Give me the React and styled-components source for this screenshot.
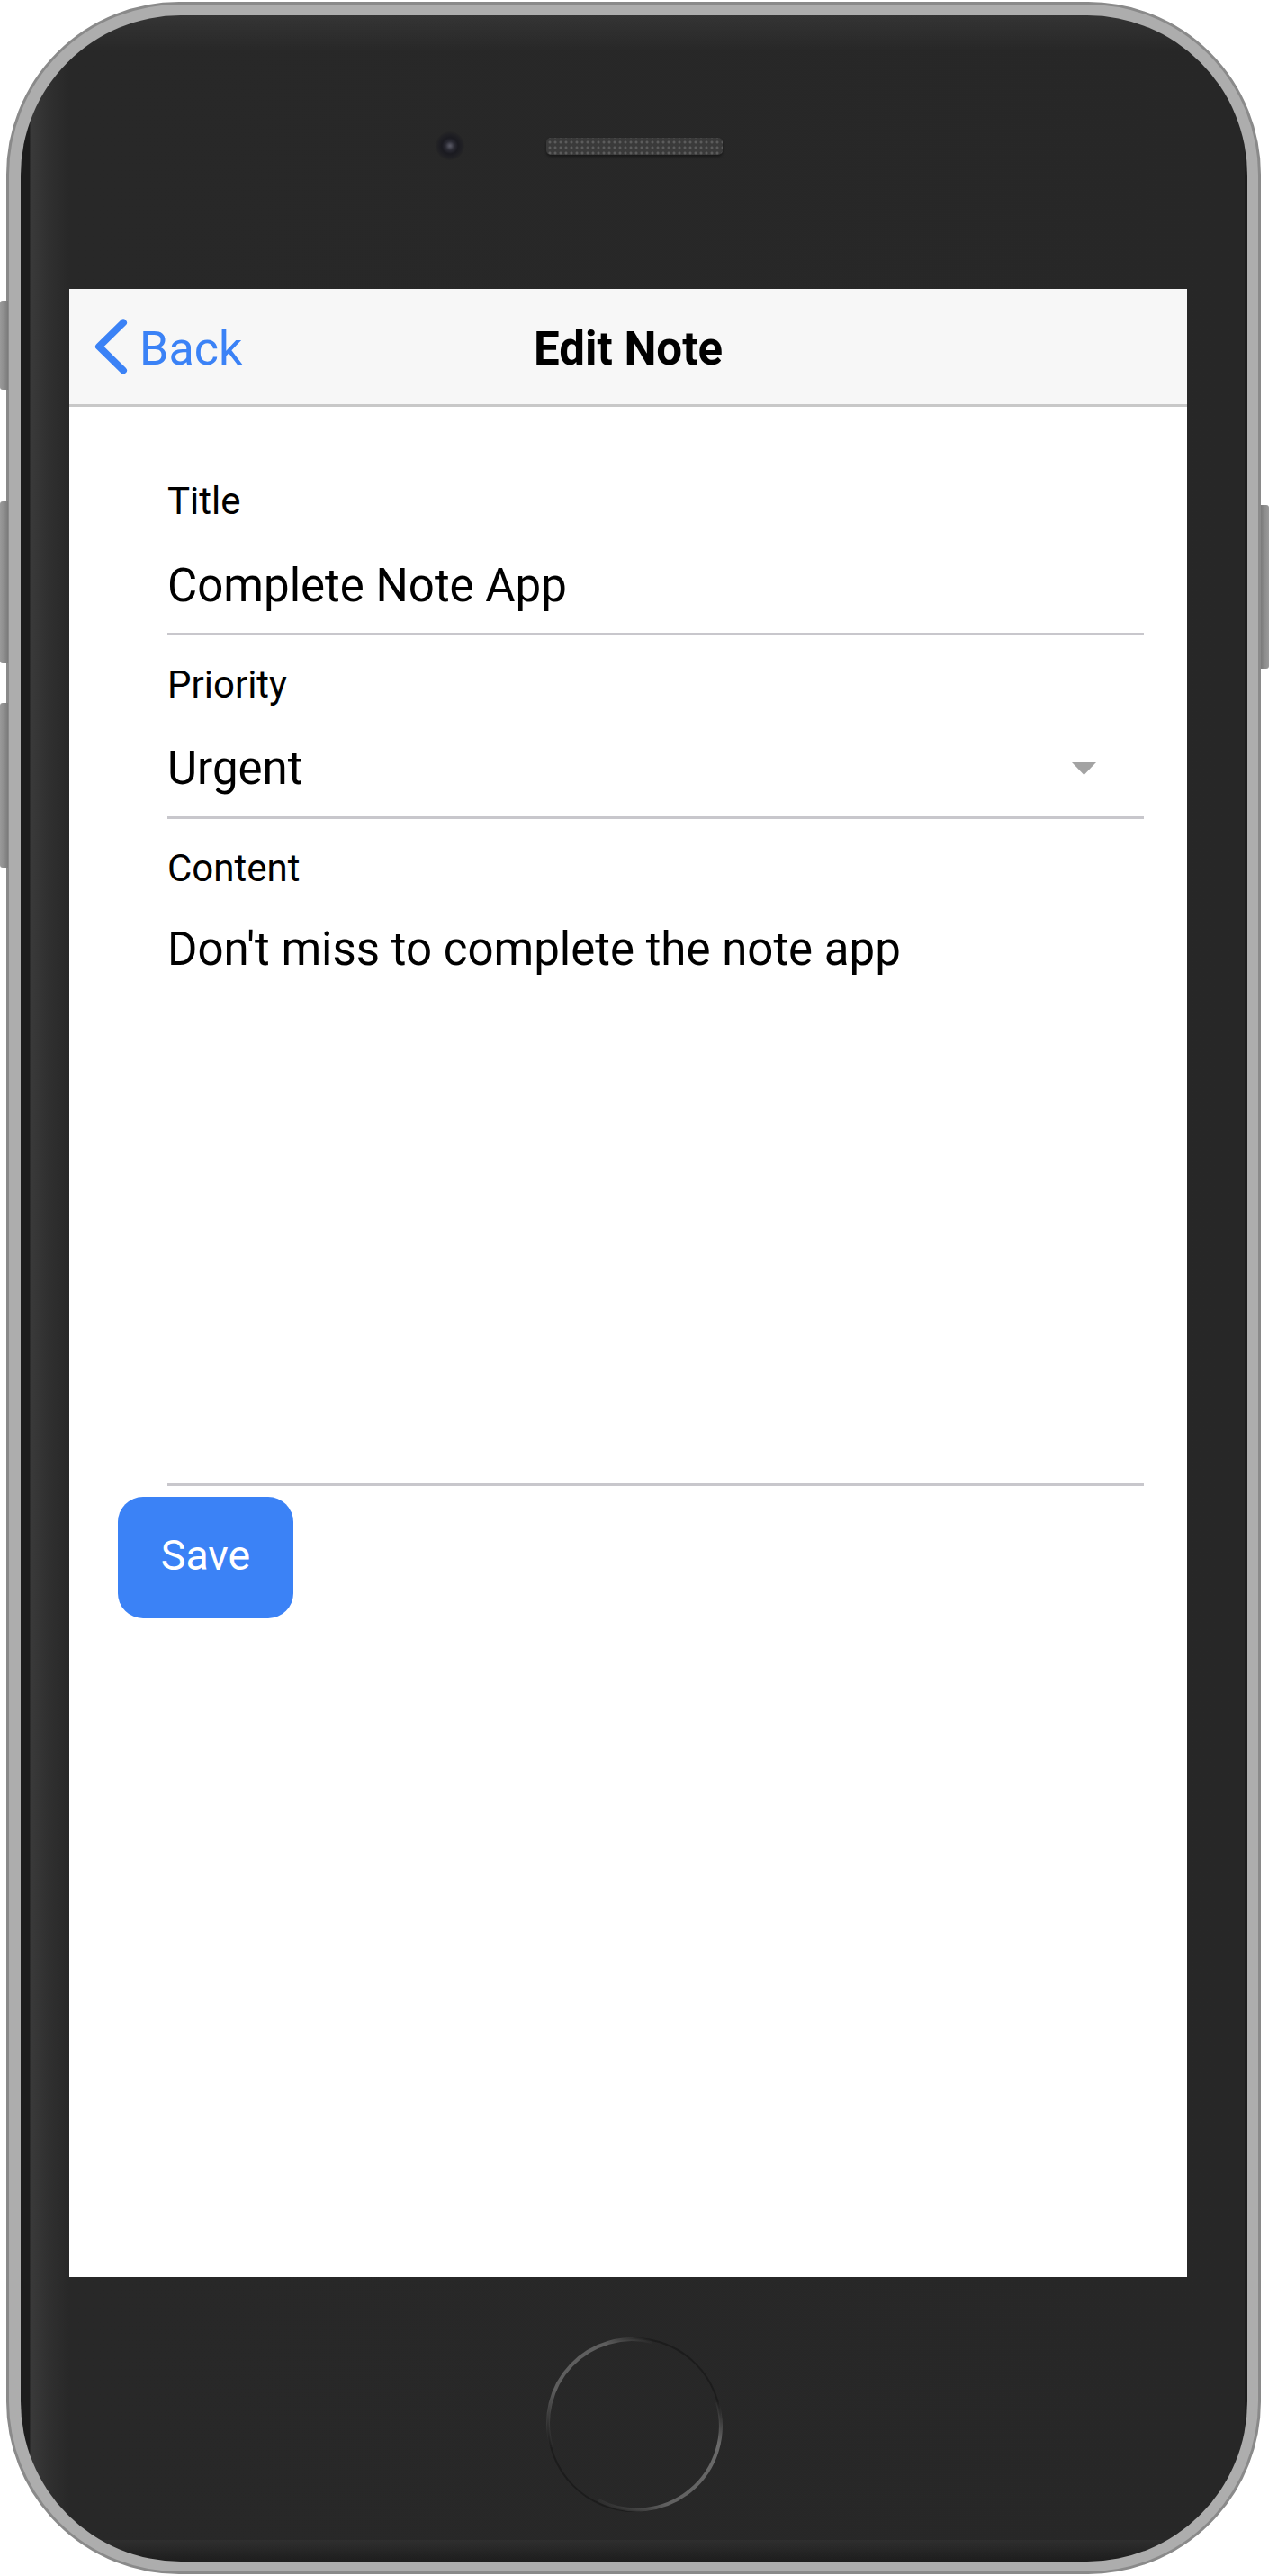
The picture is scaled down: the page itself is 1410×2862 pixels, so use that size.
import React from 'react';
import styled, { createGlobalStyle } from 'styled-components';

const GlobalStyle = createGlobalStyle`
  html, body { margin: 0; padding: 0; background: #ffffff; }
  body { font-family: Roboto, "Noto Sans", "Liberation Sans", sans-serif; }
  *, *::before, *::after { box-sizing: border-box; }
`;

const Stage = styled.div`
  width: 1410px;
  height: 2862px;
  padding: 2px 0 0 7px;
  background: #ffffff;
`;

const Phone = styled.div`
  position: relative;
  width: 1394px;
  height: 2858px;
  border: 3px solid #8a8a8a;
  border-radius: 192px;
  background: #adadad;
  padding: 12px 12px 11px 13px;
`;

const SideButton = styled.div`
  position: absolute;
  top: ${(p) => p.$top}px;
  height: ${(p) => p.$h}px;
  width: 9px;
  ${(p) =>
    p.$side === 'left'
      ? 'left: -10px; border-radius: 3px 0 0 3px; background: linear-gradient(to right, #9a9a9a, #8a8a8a 60%, #7a7a7a);'
      : 'right: -12px; border-radius: 0 3px 3px 0; background: linear-gradient(to right, #7a7a7a, #8a8a8a 40%, #9a9a9a);'}
`;

const Body = styled.div`
  height: 100%;
  border-radius: 178px;
  overflow: hidden;
  display: flex;
  flex-direction: column;
  background:
    linear-gradient(to bottom, rgba(255,255,255,0.06) 0, rgba(255,255,255,0) 40px),
    linear-gradient(to bottom, rgba(0,0,0,0) calc(100% - 24px), rgba(255,255,255,0.03) calc(100% - 24px), rgba(0,0,0,0.25) 100%),
    linear-gradient(to right, #1d1d1d 0, #1d1d1d 10px, #3a3a3a 11px, #303030 30px, #282828 54px, #272727 calc(100% - 3px), #1e1e1e calc(100% - 3px));
`;

const TopBezel = styled.div`
  height: 304px;
  flex: none;
  display: flex;
  align-items: center;
  padding: 0 0 14px 461px;
  gap: 91px;
`;

const Camera = styled.div`
  width: 32px;
  height: 32px;
  border-radius: 50%;
  background: radial-gradient(circle, #5a5a66 0, #4a4a55 2px, #2a2a33 5px, #1a1a20 9px, #202024 13px, #262626 16px);
`;

const Speaker = styled.div`
  width: 196px;
  height: 19px;
  border-radius: 5px;
  background-color: #3a3a3a;
  background-image: radial-gradient(circle, #5c5c5c 1.2px, transparent 1.8px);
  background-size: 6px 6px;
  background-position: 1px 2px;
  box-shadow: 0 2px 3px rgba(0, 0, 0, 0.4);
`;

const Screen = styled.div`
  flex: none;
  margin-left: 54px;
  width: 1242px;
  height: 2209px;
  background: #ffffff;
  display: flex;
  flex-direction: column;
`;

const BottomBezel = styled.div`
  flex: 1;
  display: flex;
  justify-content: center;
  align-items: center;
  padding-top: 12px;
`;

const Header = styled.div`
  height: 131px;
  flex: none;
  display: grid;
  grid-template-columns: 1fr auto 1fr;
  align-items: center;
  background: #f7f7f7;
  border-bottom: 3px solid #c8c8c8;
`;

const BackButton = styled.div`
  display: flex;
  align-items: center;
  gap: 11px;
  padding-left: 27px;
  color: #3b82f6;
`;

const HeaderText = styled.span`
  padding-top: 4px;
  line-height: normal;
  font-size: ${(p) => (p.$bold ? 51 : 52)}px;
  font-weight: ${(p) => (p.$bold ? 700 : 400)};
  color: ${(p) => (p.$bold ? '#000000' : 'inherit')};
`;

const Form = styled.div`
  display: flex;
  flex-direction: column;
  align-items: flex-start;
  padding: 80px 48px 0 54px;
`;

const Field = styled.div`
  align-self: stretch;
  display: flex;
  flex-direction: column;
  margin-left: 55px;
  margin-bottom: ${(p) => p.$gap || 0}px;
`;

const Label = styled.div`
  font-size: 42px;
  line-height: 50px;
  color: #000000;
  margin-bottom: ${(p) => p.$gap}px;
`;

const TextInput = styled.input`
  display: block;
  width: 100%;
  height: 86px;
  margin: 0;
  padding: 0 0 23px 0;
  border: none;
  border-bottom: 3px solid #c8c7cc;
  outline: none;
  background: transparent;
  font-family: Roboto, "Noto Sans", "Liberation Sans", sans-serif;
  font-size: 51px;
  line-height: 60px;
  color: #000000;
`;

const SelectRow = styled.div`
  display: flex;
  align-items: center;
  justify-content: space-between;
  height: 86px;
  padding: 0 53px 23px 0;
  border-bottom: 3px solid #c8c7cc;
  font-size: 51px;
  line-height: 60px;
  color: #000000;
`;

const TextArea = styled.textarea`
  display: block;
  width: 100%;
  height: 626px;
  margin: 0;
  padding: 0;
  border: none;
  border-bottom: 3px solid #c8c7cc;
  outline: none;
  resize: none;
  background: transparent;
  font-family: Roboto, "Noto Sans", "Liberation Sans", sans-serif;
  font-size: 51px;
  line-height: 60px;
  color: #000000;
`;

const SaveButton = styled.button`
  margin: 12px 0 0 0;
  width: 195px;
  height: 135px;
  padding: 0 0 6px 0;
  display: flex;
  align-items: center;
  justify-content: center;
  border: none;
  border-radius: 28px;
  background: #3b82f6;
  color: #ffffff;
  font-family: Roboto, "Noto Sans", "Liberation Sans", sans-serif;
  font-size: 46.5px;
  line-height: normal;
`;

const Chevron = () => (
  <svg width="40" height="66" viewBox="0 0 40 66" fill="none">
    <polyline
      points="33,6.5 6,33 33,59.5"
      stroke="#3b82f6"
      strokeWidth="8"
      strokeLinecap="round"
      strokeLinejoin="round"
    />
  </svg>
);

const Caret = () => (
  <svg width="27" height="14" viewBox="0 0 27 14">
    <polygon points="0,0 27,0 13.5,14" fill="#a3a3a3" />
  </svg>
);

const HomeButton = () => (
  <svg width="200" height="200" viewBox="0 0 200 200">
    <defs>
      <linearGradient id="arcA" x1="0" y1="1" x2="1" y2="0">
        <stop offset="0" stopColor="#555555" stopOpacity="0" />
        <stop offset="0.3" stopColor="#5e5e5e" />
        <stop offset="0.75" stopColor="#5e5e5e" />
        <stop offset="1" stopColor="#555555" stopOpacity="0" />
      </linearGradient>
      <linearGradient id="arcB" x1="1" y1="0" x2="0" y2="1">
        <stop offset="0" stopColor="#666666" stopOpacity="0" />
        <stop offset="0.2" stopColor="#6a6a6a" />
        <stop offset="0.7" stopColor="#606060" />
        <stop offset="1" stopColor="#555555" stopOpacity="0" />
      </linearGradient>
    </defs>
    <circle cx="100" cy="100" r="96" fill="none" stroke="#1c1c1c" strokeWidth="2" />
    <path d="M 8 125 A 93 93 0 0 1 120 8" fill="none" stroke="url(#arcA)" strokeWidth="4" />
    <path d="M 192 75 A 93 93 0 0 1 60 184" fill="none" stroke="url(#arcB)" strokeWidth="4" />
  </svg>
);

export default function App() {
  return (
    <Stage>
      <GlobalStyle />
      <Phone>
        <SideButton $side="left" $top={329} $h={99} />
        <SideButton $side="left" $top={552} $h={180} />
        <SideButton $side="left" $top={776} $h={183} />
        <SideButton $side="right" $top={556} $h={182} />
        <Body>
          <TopBezel>
            <Camera />
            <Speaker />
          </TopBezel>
          <Screen>
            <Header>
              <BackButton>
                <Chevron />
                <HeaderText>Back</HeaderText>
              </BackButton>
              <HeaderText $bold>Edit Note</HeaderText>
              <div />
            </Header>
            <Form>
              <Field $gap={30}>
                <Label $gap={38}>Title</Label>
                <TextInput defaultValue="Complete Note App" />
              </Field>
              <Field $gap={30}>
                <Label $gap={38}>Priority</Label>
                <SelectRow>
                  <span>Urgent</span>
                  <Caret />
                </SelectRow>
              </Field>
              <Field>
                <Label $gap={35}>Content</Label>
                <TextArea defaultValue="Don't miss to complete the note app" />
              </Field>
              <SaveButton>Save</SaveButton>
            </Form>
          </Screen>
          <BottomBezel>
            <HomeButton />
          </BottomBezel>
        </Body>
      </Phone>
    </Stage>
  );
}
